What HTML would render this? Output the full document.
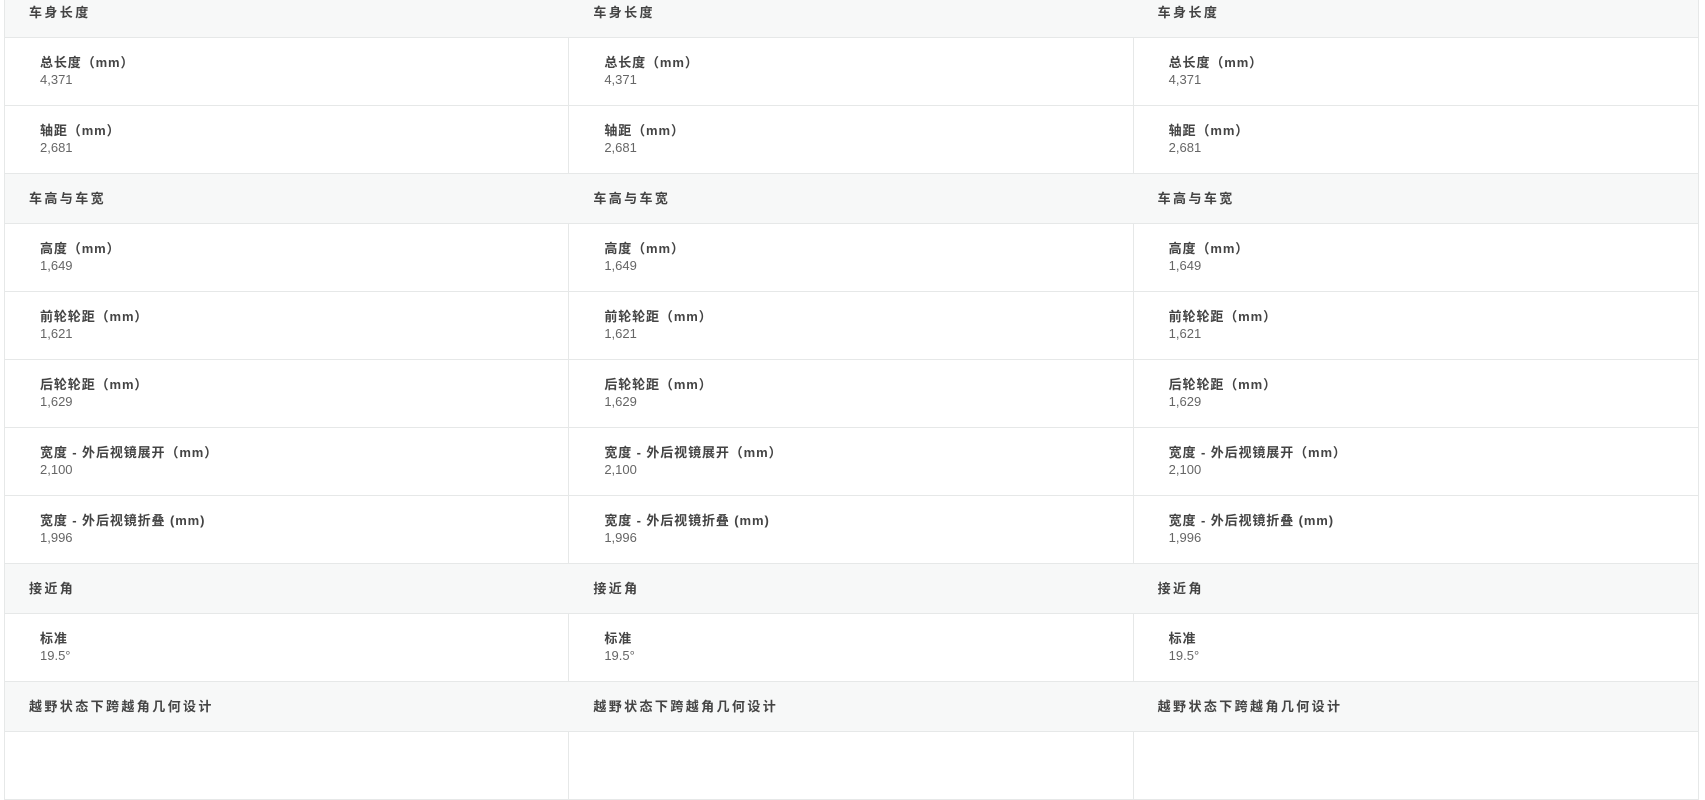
<!DOCTYPE html>
<html><head><meta charset="utf-8"><style>
body{margin:0;width:1705px;height:738px;overflow:hidden;background:#fff;font-family:"Liberation Sans","Noto Sans CJK SC",sans-serif;}
#t{position:absolute;left:4px;top:-12px;width:1695px;border-left:1px solid #e6e8e8;border-right:1px solid #e6e8e8;box-sizing:border-box;}
.h{height:50px;background:#f7f8f8;border-bottom:1px solid #e6e8e8;box-sizing:border-box;display:flex;}
.h div{width:565px;box-sizing:border-box;padding-left:24px;line-height:49px;font-size:13px;font-weight:bold;color:#444;letter-spacing:2.4px}
.r{height:68px;border-bottom:1px solid #e6e8e8;box-sizing:border-box;display:flex;}
.r div{width:565px;box-sizing:border-box;padding:16px 0 0 35px;border-right:1px solid #e6e8e8;}
.r div:last-child{border-right:none}
b{display:block;font-size:13px;line-height:17px;color:#444;letter-spacing:0.9px}
span{display:block;font-size:13px;line-height:17px;color:#666;}
</style></head><body><div id="t">
<div class="h"><div>车身长度</div><div>车身长度</div><div>车身长度</div></div>
<div class="r"><div><b>总长度（mm）</b><span>4,371</span></div><div><b>总长度（mm）</b><span>4,371</span></div><div><b>总长度（mm）</b><span>4,371</span></div></div>
<div class="r"><div><b>轴距（mm）</b><span>2,681</span></div><div><b>轴距（mm）</b><span>2,681</span></div><div><b>轴距（mm）</b><span>2,681</span></div></div>
<div class="h"><div>车高与车宽</div><div>车高与车宽</div><div>车高与车宽</div></div>
<div class="r"><div><b>高度（mm）</b><span>1,649</span></div><div><b>高度（mm）</b><span>1,649</span></div><div><b>高度（mm）</b><span>1,649</span></div></div>
<div class="r"><div><b>前轮轮距（mm）</b><span>1,621</span></div><div><b>前轮轮距（mm）</b><span>1,621</span></div><div><b>前轮轮距（mm）</b><span>1,621</span></div></div>
<div class="r"><div><b>后轮轮距（mm）</b><span>1,629</span></div><div><b>后轮轮距（mm）</b><span>1,629</span></div><div><b>后轮轮距（mm）</b><span>1,629</span></div></div>
<div class="r"><div><b>宽度 - 外后视镜展开（mm）</b><span>2,100</span></div><div><b>宽度 - 外后视镜展开（mm）</b><span>2,100</span></div><div><b>宽度 - 外后视镜展开（mm）</b><span>2,100</span></div></div>
<div class="r"><div><b>宽度 - 外后视镜折叠 (mm)</b><span>1,996</span></div><div><b>宽度 - 外后视镜折叠 (mm)</b><span>1,996</span></div><div><b>宽度 - 外后视镜折叠 (mm)</b><span>1,996</span></div></div>
<div class="h"><div>接近角</div><div>接近角</div><div>接近角</div></div>
<div class="r"><div><b>标准</b><span>19.5°</span></div><div><b>标准</b><span>19.5°</span></div><div><b>标准</b><span>19.5°</span></div></div>
<div class="h"><div>越野状态下跨越角几何设计</div><div>越野状态下跨越角几何设计</div><div>越野状态下跨越角几何设计</div></div>
<div class="r"><div></div><div></div><div></div></div>
</div></body></html>
